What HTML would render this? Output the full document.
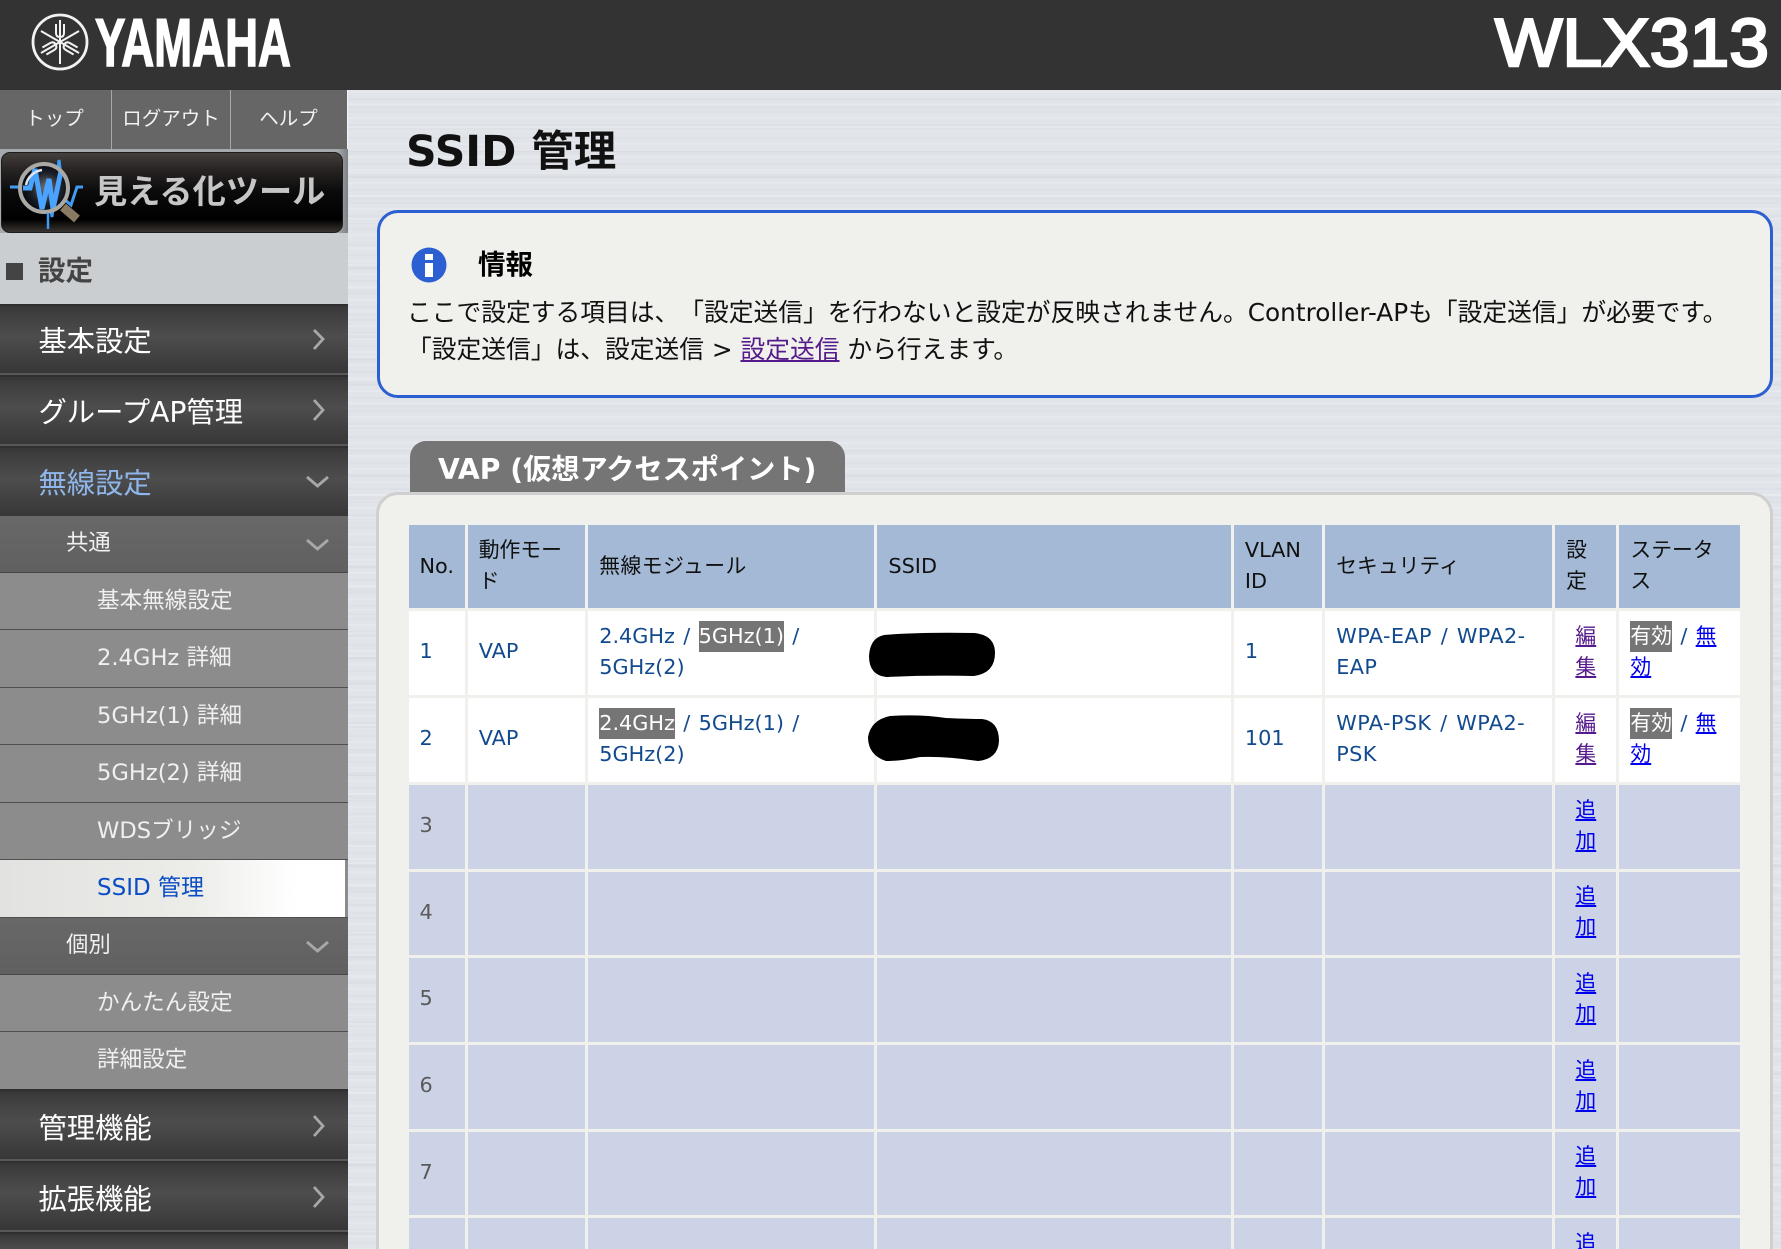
<!DOCTYPE html>
<html lang="ja">
<head>
<meta charset="utf-8">
<title>SSID 管理</title>
<style>
html,body{margin:0;padding:0;background:#e2e5ea;}
#page{position:relative;width:1781px;height:1249px;overflow:hidden;font-family:"DejaVu Sans","Noto Sans CJK JP",sans-serif;text-spacing-trim:space-all;
background:
repeating-linear-gradient(180deg,rgba(255,255,255,.14) 0 2px,rgba(255,255,255,0) 2px 7px,rgba(150,155,170,.05) 7px 9px,rgba(255,255,255,0) 9px 13px),
repeating-linear-gradient(180deg,rgba(255,255,255,0) 0 11px,rgba(255,255,255,.12) 11px 13px,rgba(140,145,160,.04) 13px 17px,rgba(255,255,255,0) 17px 23px),
#e1e4e9;}
.abs{position:absolute;}
#hdr{left:0;top:0;width:1781px;height:90px;background:#333;}
#topnav{left:0;top:90px;width:347px;height:59px;background:#666;border-right:1px solid #f4f4f4;color:#f2f2f2;font-size:19.5px;line-height:58px;text-align:center;}
#topnav div{position:absolute;top:0;height:59px;}
#side{left:0;top:149px;width:348px;height:1100px;background:#8c8c8c;overflow:hidden;}
#btnwrap{left:0;top:149px;width:348px;height:84px;background:linear-gradient(90deg,#a6a9ad 0,#a6a9ad 97%,#7d8085 100%);}
#btn{left:1px;top:152px;width:340px;height:79px;border:1px solid #1c1c1c;border-radius:9px;box-sizing:content-box;background:linear-gradient(180deg,#45403d 0,#2b2726 18%,#0a0a0a 50%,#000 84%,#3a3532 100%);color:#c9c9c9;}
#btn span{position:absolute;left:92px;top:0;font-size:33.2px;font-weight:700;line-height:78px;white-space:nowrap;color:#c6c6c6;}
#sec{left:0;top:233px;width:348px;height:71px;background:#cbced1;}
#sec i{position:absolute;left:6px;top:30px;width:17px;height:17px;background:#444;}
#sec b{position:absolute;left:38px;top:0;font-size:27.500px;line-height:77px;color:#444;}
.m{position:absolute;left:0;width:348px;box-sizing:border-box;background:linear-gradient(180deg,#363636 0,#3d3d3d 8%,#4d4d4d 45%,#3f3f3f 80%,#373737 100%);border-top:2px solid #2f2f2f;border-bottom:2px solid #585858;color:#fff;font-size:28.3px;padding-left:38.500px;white-space:nowrap;}
.g{position:absolute;left:0;width:348px;box-sizing:border-box;background:linear-gradient(180deg,#686868,#606060);border-bottom:1px solid #474747;color:#f0f0f0;font-size:22.4px;padding-left:66px;}
.s{position:absolute;left:0;width:348px;box-sizing:border-box;background:#8c8c8c;border-bottom:1px solid #4f4f4f;color:#f0f0f0;font-size:22.6px;padding-left:97px;white-space:nowrap;}
.sel{background:linear-gradient(90deg,#e2e2e0 0,#ecece9 55%,#fff 85%,#fff 345px,#8c8c8c 345px);color:#0a4dc4;font-size:23px;}
#title{left:406px;top:123px;font-size:42.5px;font-weight:700;line-height:60px;color:#111;white-space:nowrap;}
#info{left:377px;top:210px;width:1396px;height:188px;box-sizing:border-box;border:3px solid #2c60d2;border-radius:21px;background:#f0f1ec;}
#infot{left:478px;top:245px;font-size:27.5px;font-weight:700;line-height:40px;color:#000;}
.il{left:407px;font-size:24.75px;line-height:37px;color:#111;white-space:nowrap;}
.il a{color:#551a8b;text-decoration:underline;}
#tab{left:410px;top:441px;width:435px;height:52px;background:#757575;border-radius:16px 16px 0 0;color:#fff;font-weight:700;font-size:28.2px;line-height:58px;white-space:nowrap;text-indent:28px;}
#panel{left:376px;top:492px;width:1397px;height:800px;box-sizing:border-box;border:3px solid #cfcfcf;border-radius:22px 22px 0 0;background:#f0f1ec;}
#tbl{position:absolute;left:405.5px;top:521.5px;border-collapse:separate;border-spacing:3.5px;table-layout:fixed;width:1337px;font-size:20.8px;line-height:31px;word-spacing:1.7px;}
#tbl td,#tbl th{padding:0 0 0 11px;box-sizing:border-box;text-align:left;font-weight:400;white-space:nowrap;vertical-align:middle;}
#tbl td{padding-bottom:2px;}
#tbl th{background:#a3b9d6;color:#111;}
#tbl .d td{background:#fff;color:#124a8e;}
#tbl .e td{background:#cdd3e6;color:#5a5a5a;}
#tbl td.c{padding:0 0 2px 0;text-align:center;}
#tbl a.v{color:#551a8b;text-decoration:underline;}
#tbl a.b{color:#0000ee;text-decoration:underline;}
.ls{letter-spacing:.4px;}
.h{display:inline-block;background:#757575;color:#fff;line-height:31px;}
svg{display:block;}
</style>
</head>
<body>
<div id="page">
  <div class="abs" id="hdr"></div>
  <svg class="abs" style="left:0;top:0" width="320" height="90">
    <g transform="translate(60,42)" fill="none" stroke="#f2f2f2">
      <circle r="27" stroke-width="2.8"/>
      <g stroke-width="2">
        <g><path d="M0 -22V22M-4 -18V-9Q-4 -5 0 -5Q4 -5 4 -9V-18"/></g>
        <g transform="rotate(60)"><path d="M0 -22V22M-4 18V9Q-4 5 0 5Q4 5 4 9V18"/></g>
        <g transform="rotate(120)"><path d="M0 -22V22M-4 -18V-9Q-4 -5 0 -5Q4 -5 4 -9V-18"/></g>
      </g>
    </g>
    <text x="95" y="66" fill="#fff" stroke="#fff" stroke-width="1.6" font-family="Liberation Sans" font-weight="700" font-size="68" textLength="196" lengthAdjust="spacingAndGlyphs">YAMAHA</text>
  </svg>
  <svg class="abs" style="left:1480px;top:0" width="301" height="90">
    <text x="15" y="66" fill="#fff" stroke="#fff" stroke-width="2.6" font-family="Liberation Sans" font-size="68" textLength="274" lengthAdjust="spacingAndGlyphs">WLX313</text>
  </svg>

  <div class="abs" id="side"></div>
  <div class="abs" id="topnav">
    <div style="left:-2px;width:113px;border-right:1px solid #a8a8a8">トップ</div>
    <div style="left:112px;width:118px;border-right:1px solid #a8a8a8">ログアウト</div>
    <div style="left:231px;width:115px">ヘルプ</div>
  </div>
  <div class="abs" id="btnwrap"></div>
  <div class="abs" id="btn"><span>見える化ツール</span></div>
  <svg class="abs" style="left:6px;top:155px" width="82" height="76" viewBox="0 0 82 76">
    <defs><radialGradient id="lens" cx=".55" cy=".5" r=".55"><stop offset="0" stop-color="#777"/><stop offset=".6" stop-color="#1c2028"/><stop offset="1" stop-color="#05070c"/></radialGradient></defs>
    <path d="M4 32H22L27 14L34 56L40 20L46 62L53 5L58 44L65 50L71 32H77" fill="none" stroke="#3f9bf5" stroke-width="3"/>
    <circle cx="38" cy="33" r="23" fill="url(#lens)"/>
    <path d="M17 33H24L29 14L36 54L43 24L47 54L55 16" fill="none" stroke="#4aa3ff" stroke-width="5"/>
    <path d="M20 30A19 19 0 0 1 36 15" fill="none" stroke="#dfe6ee" stroke-width="2.5"/>
    <circle cx="38" cy="33" r="24" fill="none" stroke="#aaa9a4" stroke-width="4"/>
    <path d="M57 52L71 64" stroke="#8a7a62" stroke-width="9"/>
    <path d="M42 58V74" stroke="#3f9bf5" stroke-width="2.5"/>
  </svg>
  <div class="abs" id="sec"><i></i><b>設定</b></div>

  <div class="m" style="top:304px;height:71px;line-height:71px">基本設定</div>
  <div class="m" style="top:375px;height:71px;line-height:71px">グループAP管理</div>
  <div class="m" style="top:446px;height:70px;line-height:71px;color:#8fb6ea;border-bottom:0">無線設定</div>
  <div class="g" style="top:516px;height:57px;line-height:55px">共通</div>
  <div class="s" style="top:573px;height:57.4px;line-height:56px">基本無線設定</div>
  <div class="s" style="top:630.4px;height:57.4px;line-height:56px">2.4GHz 詳細</div>
  <div class="s" style="top:687.8px;height:57.4px;line-height:56px">5GHz(1) 詳細</div>
  <div class="s" style="top:745.2px;height:57.4px;line-height:56px">5GHz(2) 詳細</div>
  <div class="s" style="top:802.6px;height:57.4px;line-height:56px">WDSブリッジ</div>
  <div class="s sel" style="top:860px;height:58px;line-height:57px">SSID 管理</div>
  <div class="g" style="top:918px;height:57px;line-height:55px">個別</div>
  <div class="s" style="top:975px;height:57.4px;line-height:57px">かんたん設定</div>
  <div class="s" style="top:1032.4px;height:57px;line-height:57px;border-bottom:0">詳細設定</div>
  <div class="m" style="top:1089px;height:72px;line-height:76px">管理機能</div>
  <div class="m" style="top:1161px;height:71px;line-height:74px">拡張機能</div>
  <div class="m" style="top:1232px;height:40px;"></div>

  <svg class="abs" style="left:299px;top:300px" width="49" height="960" fill="none" stroke="#a8a8a8" stroke-width="2.8">
    <path d="M15 30L24 39L15 49"/>
    <path d="M15 100L24 110L15 120"/>
    <path d="M8 177L18.500 186L29 177"/>
    <path d="M8 240L18.500 249L29 240"/>
    <path d="M8 642L18.500 651L29 642"/>
    <path d="M15 816L24 826L15 836"/>
    <path d="M15 887L24 897L15 907"/>
  </svg>

  <div class="abs" id="title">SSID 管理</div>

  <div class="abs" id="info"></div>
  <svg class="abs" style="left:411px;top:247px" width="36" height="36">
    <circle cx="18" cy="18" r="17.500" fill="#2c60d2"/>
    <rect x="14" y="7" width="8" height="6" fill="#fff"/>
    <rect x="14" y="16" width="8" height="14" fill="#fff"/>
  </svg>
  <div class="abs" id="infot">情報</div>
  <div class="abs il" style="top:294px">ここで設定する項目は、「設定送信」を行わないと設定が反映されません。Controller-APも「設定送信」が必要です。</div>
  <div class="abs il" style="top:331px">「設定送信」は、設定送信 &gt; <a href="#">設定送信</a> から行えます。</div>

  <div class="abs" id="tab">VAP (仮想アクセスポイント)</div>
  <div class="abs" id="panel"></div>

  <table id="tbl">
    <colgroup>
      <col style="width:56px"><col style="width:117px"><col style="width:285px"><col style="width:352px"><col style="width:88px"><col style="width:226px"><col style="width:61px"><col style="width:119.500px">
    </colgroup>
    <tr style="height:83px">
      <th>No.</th><th>動作モー<br>ド</th><th style="letter-spacing:.5px">無線モジュール</th><th>SSID</th><th>VLAN<br>ID</th><th>セキュリティ</th><th>設<br>定</th><th>ステータ<br>ス</th>
    </tr>
    <tr class="d" style="height:84px">
      <td>1</td><td>VAP</td><td>2.4GHz / <span class="h">5GHz(1)</span> /<br>5GHz(2)</td><td></td><td>1</td><td class="ls">WPA-EAP / WPA2-<br>EAP</td><td class="c"><a class="v" href="#">編<br>集</a></td><td><span class="h">有効</span> / <a class="b" href="#">無<br>効</a></td>
    </tr>
    <tr class="d" style="height:84px">
      <td>2</td><td>VAP</td><td><span class="h">2.4GHz</span> / 5GHz(1) /<br>5GHz(2)</td><td></td><td>101</td><td class="ls">WPA-PSK / WPA2-<br>PSK</td><td class="c"><a class="v" href="#">編<br>集</a></td><td><span class="h">有効</span> / <a class="b" href="#">無<br>効</a></td>
    </tr>
    <tr class="e" style="height:84px"><td>3</td><td></td><td></td><td></td><td></td><td></td><td class="c"><a class="b" href="#">追<br>加</a></td><td></td></tr>
    <tr class="e" style="height:83px"><td>4</td><td></td><td></td><td></td><td></td><td></td><td class="c"><a class="b" href="#">追<br>加</a></td><td></td></tr>
    <tr class="e" style="height:84px"><td>5</td><td></td><td></td><td></td><td></td><td></td><td class="c"><a class="b" href="#">追<br>加</a></td><td></td></tr>
    <tr class="e" style="height:84px"><td>6</td><td></td><td></td><td></td><td></td><td></td><td class="c"><a class="b" href="#">追<br>加</a></td><td></td></tr>
    <tr class="e" style="height:83px"><td>7</td><td></td><td></td><td></td><td></td><td></td><td class="c"><a class="b" href="#">追<br>加</a></td><td></td></tr>
    <tr class="e" style="height:84px"><td>8</td><td></td><td></td><td></td><td></td><td></td><td class="c"><a class="b" href="#">追<br>加</a></td><td></td></tr>
  </table>

  <svg class="abs" style="left:860px;top:625px" width="150" height="145" fill="#000">
    <path d="M24 10Q60 7 114 8Q135 10 135 28Q135 48 114 51Q70 50 26 52Q9 50 9 31Q10 13 24 10Z"/>
    <path d="M30 91Q60 89 86 93Q110 94 122 94Q139 96 139 116Q138 134 118 136Q85 131 60 132Q42 136 26 136Q8 130 8 112Q11 95 30 91Z"/>
  </svg>
</div>
</body>
</html>
